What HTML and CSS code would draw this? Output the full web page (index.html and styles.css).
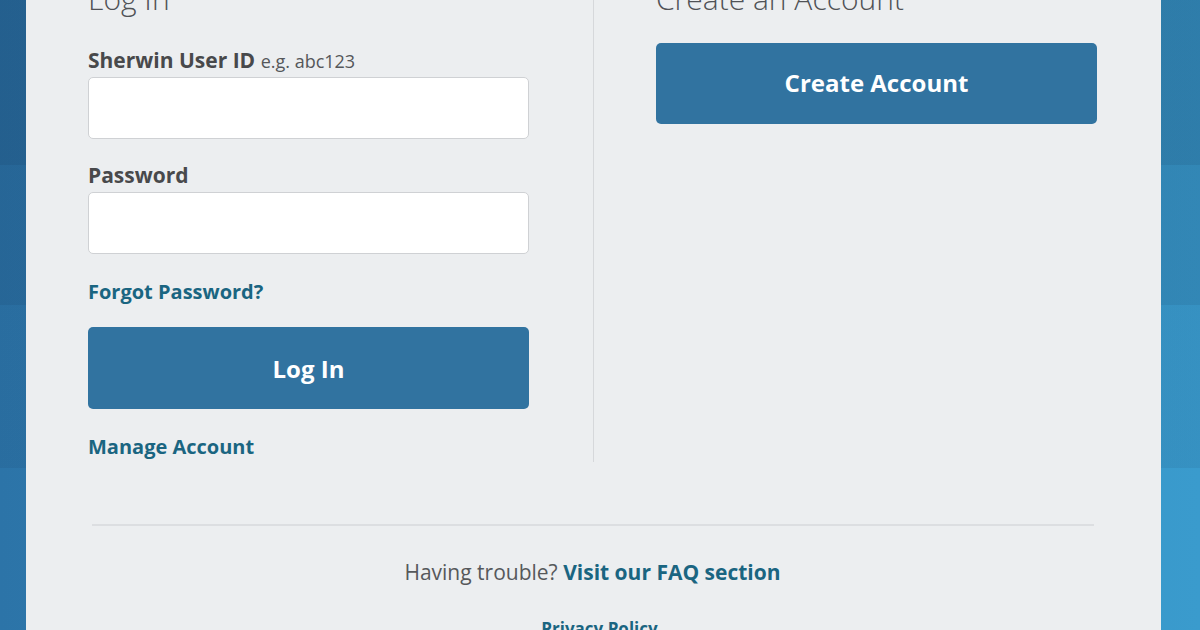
FILE: index.html
```html
<!DOCTYPE html>
<html lang="en">
<head>
<meta charset="utf-8">
<title>Log In</title>
<link rel="stylesheet" href="styles.css">
</head>
<body>
<div class="page">
  <main class="panel">
    <div class="columns">
      <section class="col col-login">
        <h2 class="heading">Log In</h2>
        <label class="label label-uid" for="uid">Sherwin User ID <span class="hint">e.g. abc123</span></label>
        <input class="field field-uid" id="uid" type="text">
        <label class="label label-pw" for="pw">Password</label>
        <input class="field" id="pw" type="password">
        <a class="link link-forgot" href="#">Forgot Password?</a>
        <button class="btn btn-login" type="button">Log In</button>
        <a class="link link-manage" href="#">Manage Account</a>
      </section>
      <section class="col col-create">
        <h2 class="heading">Create an Account</h2>
        <button class="btn btn-create" type="button">Create Account</button>
      </section>
    </div>
    <hr class="rule">
    <p class="trouble">Having trouble? <a class="link" href="#">Visit our FAQ section</a></p>
    <p class="privacy"><a class="link" href="#">Privacy Policy</a></p>
  </main>
</div>
</body>
</html>
```
FILE: styles.css
```css
html, body {
  margin: 0;
  padding: 0;
}
body {
  width: 1200px;
  height: 630px;
  overflow: hidden;
  font-family: "Open Sans", "Liberation Sans", sans-serif;
  background:
    linear-gradient(to bottom,
      rgba(10, 30, 60, 0.24) 0 165px,
      rgba(10, 30, 60, 0.16) 165px 305px,
      rgba(10, 30, 60, 0.08) 305px 468px,
      rgba(10, 30, 60, 0) 468px 630px),
    linear-gradient(to right, #2c74a8 0, #3a9bcd 100%);
}
.page {
  margin-top: -19px;
  padding-left: 26px;
}
.panel {
  width: 1135px;
  background: #eceef0;
  padding-bottom: 40px;
}
.columns {
  display: flex;
}
.col {
  display: flex;
  flex-direction: column;
  align-items: flex-start;
  box-sizing: border-box;
}
.col-login {
  width: 568px;
  padding-left: 62px;
  padding-right: 65px;
  padding-bottom: 2px;
  border-right: 1px solid #d6d8db;
}
.col-create {
  flex: 1;
  padding-left: 62px;
  padding-right: 64px;
}
.heading {
  margin: 0;
  font-size: 30px;
  line-height: 36px;
  font-weight: 300;
  color: #505256;
}
.label {
  margin-top: 29px;
  font-size: 21px;
  line-height: 27px;
  font-weight: 700;
  color: #48494b;
}
.label-uid {
  margin-top: 30px;
}
.label-pw {
  margin-top: 23px;
}
.hint {
  font-size: 18px;
  font-weight: 400;
  color: #55575a;
}
.field {
  margin: 3px 0 0;
  width: 441px;
  height: 62px;
  box-sizing: border-box;
  border: 1px solid #cfd1d4;
  border-radius: 5px;
  background: #ffffff;
  font: inherit;
  padding: 0 12px;
}
.field-uid {
  margin-top: 2px;
}
.link {
  color: #1a6581;
  font-weight: 700;
  text-decoration: none;
}
.link-forgot,
.link-manage {
  font-size: 20px;
  line-height: 27px;
}
.link-forgot {
  margin-top: 24px;
}
.link-manage {
  margin-top: 24px;
}
.btn {
  width: 441px;
  border: 0;
  border-radius: 5px;
  background: #3173a0;
  color: #ffffff;
  font-family: inherit;
  font-size: 24px;
  font-weight: 700;
  padding: 0;
  cursor: pointer;
}
.btn-login {
  margin-top: 22px;
  height: 82px;
}
.btn-create {
  margin-top: 26px;
  height: 81px;
  padding-bottom: 2px;
}
.rule {
  margin: 62px 67px 0 66px;
  border: 0;
  height: 2px;
  background: #dcdee1;
}
.trouble {
  margin: 33px 0 0;
  text-align: center;
  font-size: 21px;
  line-height: 27px;
  color: #56585b;
  padding-right: 2px;
}
.privacy {
  margin: 31px 0 0;
  text-align: center;
  font-size: 17px;
  line-height: 23px;
  padding-left: 12px;
}
```
